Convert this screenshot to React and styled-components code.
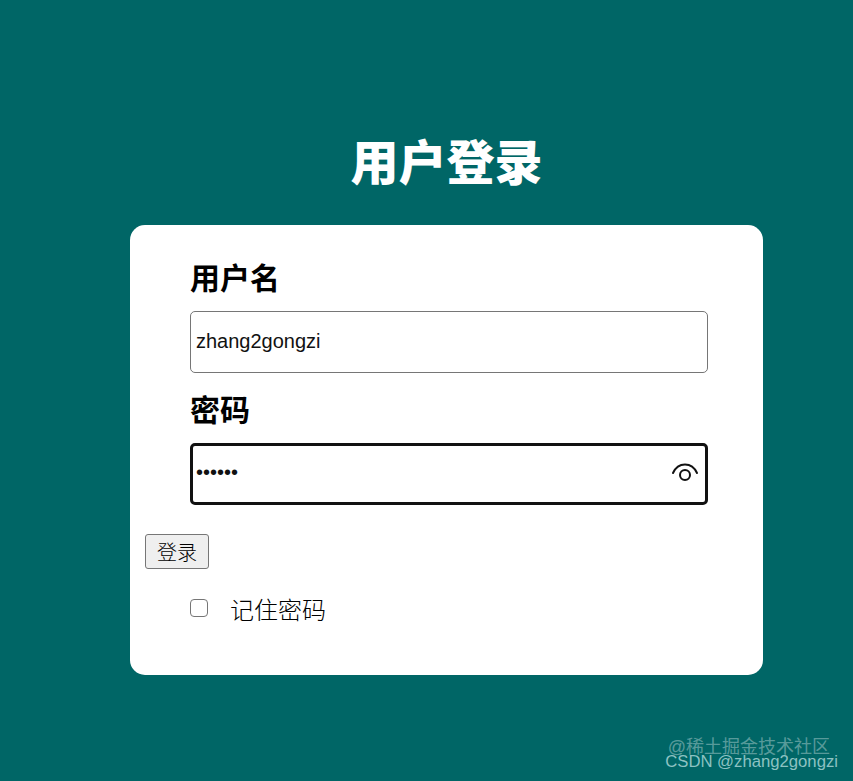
import React from 'react'
import styled, { createGlobalStyle } from 'styled-components'

const GlobalStyle = createGlobalStyle`
  html, body {
    margin: 0;
    padding: 0;
  }
  body {
    background: #006666;
    font-family: "Liberation Sans", "Noto Sans CJK SC", sans-serif;
  }
`

const Page = styled.div`
  min-height: 781px;
  padding: 134px 0 0 40px;
  box-sizing: border-box;
  display: flex;
  flex-direction: column;
  align-items: center;
  position: relative;
  overflow: hidden;
`

const Title = styled.h1`
  margin: 0 0 32px;
  height: 59px;
  line-height: 59px;
  font-size: 48px;
  font-weight: 900;
  color: #fff;
`

const Card = styled.form`
  width: 633px;
  height: 450px;
  box-sizing: border-box;
  background: #fff;
  border-radius: 15px;
  padding: 33px 55px 0 15px;
  display: flex;
  flex-direction: column;
`

const Field = styled.div`
  margin-left: 45px;
  display: flex;
  flex-direction: column;
  margin-bottom: 17px;
`

const Label = styled.label`
  font-size: 30px;
  font-weight: 700;
  line-height: 42px;
  margin-bottom: 11px;
  color: #000;
`

const InputWrap = styled.div`
  position: relative;
  height: 62px;
`

const Input = styled.input`
  width: 100%;
  height: 100%;
  box-sizing: border-box;
  font-family: "Liberation Sans", sans-serif;
  font-size: 20px;
  color: #111;
  padding: ${p => (p.$focused ? '0 0 4px 3px' : '0 0 1px 5px')};
  border: ${p => (p.$focused ? '3px solid #111' : '1px solid #767676')};
  border-radius: 5px;
  outline: none;
  background: #fff;
`

const EyeButton = styled.span`
  position: absolute;
  right: 9px;
  top: 18px;
  width: 28px;
  height: 24px;
  display: flex;
`

const Submit = styled.button`
  align-self: flex-start;
  width: 64px;
  height: 35px;
  margin-top: 12px;
  padding: 0;
  font-family: "Noto Sans CJK SC", sans-serif;
  font-size: 20px;
  font-weight: 300;
  color: #000;
  background: #efefef;
  border: 1px solid #767676;
  border-radius: 3px;
`

const Remember = styled.div`
  margin: 22px 0 0 45px;
  display: flex;
  align-items: center;
  height: 34px;
`

const Checkbox = styled.input`
  appearance: none;
  width: 18px;
  height: 18px;
  margin: 0 22px 0 0;
  box-sizing: border-box;
  border: 1.5px solid #767676;
  border-radius: 4px;
  background: #fff;
`

const RememberText = styled.span`
  font-size: 24px;
  font-weight: 300;
  color: #000;
`

const Watermark = styled.div`
  position: absolute;
  font-size: ${p => p.$size}px;
  line-height: 20px;
  white-space: nowrap;
  color: ${p => p.$color};
  right: ${p => p.$right}px;
  top: ${p => p.$top}px;
`

const EyeIcon = () => (
  <svg width="28" height="24" viewBox="0 0 28 24" fill="none" stroke="#111" strokeWidth="2">
    <path d="M2 12C4.500 6.500 9 3.500 14 3.500s9.500 3 12 8.500" strokeLinecap="round" />
    <circle cx="14" cy="14" r="5" />
  </svg>
)

const App = () => {
  return (
    <Page>
      <GlobalStyle />
      <Title>用户登录</Title>
      <Card onSubmit={e => e.preventDefault()}>
        <Field>
          <Label>用户名</Label>
          <InputWrap>
            <Input type="text" defaultValue="zhang2gongzi" />
          </InputWrap>
        </Field>
        <Field>
          <Label>密码</Label>
          <InputWrap>
            <Input type="password" defaultValue="123456" $focused />
            <EyeButton>
              <EyeIcon />
            </EyeButton>
          </InputWrap>
        </Field>
        <Submit type="submit">登录</Submit>
        <Remember>
          <Checkbox type="checkbox" />
          <RememberText>记住密码</RememberText>
        </Remember>
      </Card>
      <Watermark $size={18} $color="rgba(255,255,255,0.36)" $right={23} $top={737}>@稀土掘金技术社区</Watermark>
      <Watermark $size={16.7} $color="rgba(190,225,225,0.75)" $right={15} $top={752}>CSDN @zhang2gongzi</Watermark>
    </Page>
  )
}

export default App
